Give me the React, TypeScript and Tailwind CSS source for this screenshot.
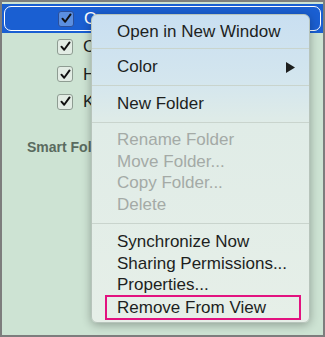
import type { ReactNode } from 'react';

const folders = [
  { label: 'O', selected: true },
  { label: 'C', selected: false },
  { label: 'H', selected: false },
  { label: 'K', selected: false },
];

const CheckBox = ({ selected }: { selected: boolean }) => (
  <div
    className={`w-4 h-4 rounded-[3px] border flex items-center justify-center ${
      selected ? 'bg-[#5b8fe0] border-[#2b4f9a]' : 'bg-[#e2ece4] border-[#8e9c92]'
    }`}
  >
    <svg viewBox="0 0 16 16" className="w-[13px] h-[13px]">
      <path d="M3 8.2 L6.4 12 L13 3" fill="none" stroke="#111" strokeWidth="2.4" strokeLinecap="round" strokeLinejoin="round" />
    </svg>
  </div>
);

const Item = ({ children, disabled, className = '' }: { children: ReactNode; disabled?: boolean; className?: string }) => (
  <div className={`pl-[25px] flex items-center whitespace-nowrap ${disabled ? 'text-[#a4aaa6]' : 'text-[#1d1f1e]'} ${className}`}>
    {children}
  </div>
);

const Separator = () => <div className="h-px bg-[#c9d4cd]" />;

export default function App() {
  return (
    <div
      className="relative w-[325px] h-[337px] border-2 border-[#7d7d7d] bg-[#cde3d3] overflow-hidden"
      style={{ fontFamily: '"Liberation Sans", Arial, sans-serif' }}
    >
      {/* folder list */}
      <div className="pt-[2px]">
        {folders.map((f) =>
          f.selected ? (
            <div key={f.label} className="h-[29px] bg-[#1a5fd2] p-[2px]">
              <div className="h-full rounded-[7px] border-[1.5px] border-white flex items-center pl-[53px] gap-[10px]">
                <CheckBox selected />
                <span className="text-white text-[17px]">{f.label}</span>
              </div>
            </div>
          ) : (
            <div key={f.label} className="h-[27.5px] flex items-center pl-[55px] gap-[10px]">
              <CheckBox selected={false} />
              <span className="text-[#1d1f1e] text-[17px]">{f.label}</span>
            </div>
          )
        )}
        <div className="mt-[21px] pl-[25px] text-[14px] font-bold text-[#5a6b5f]">Smart Folders</div>
      </div>

      {/* context menu */}
      <div className="absolute left-[89px] top-[12px] w-[219px] h-[309px] rounded-[6px] border border-[#b7c4bb] shadow-[0_2px_10px_rgba(0,0,0,0.3)] bg-[linear-gradient(to_bottom,#c9dff1_0%,#d4e6ee_22%,#e0ece7_36%,#e6efe8_100%)] text-[17px] overflow-hidden">
        <Item className="h-[33px] pt-[1px]">Open in New Window</Item>
        <Separator />
        <Item className="h-[36px] justify-between pr-[14px]">
          <span>Color</span>
          <svg viewBox="0 0 9 11" className="w-[9px] h-[11px]">
            <polygon points="0,0 9,5.5 0,11" fill="#1d1f1e" />
          </svg>
        </Item>
        <Separator />
        <Item className="h-[36px]">New Folder</Item>
        <Separator />
        <div className="pt-[6px] pb-[8px]">
          <Item disabled className="h-[21.5px]">Rename Folder</Item>
          <Item disabled className="h-[21.5px]">Move Folder...</Item>
          <Item disabled className="h-[21.5px]">Copy Folder...</Item>
          <Item disabled className="h-[21.5px]">Delete</Item>
        </div>
        <Separator />
        <div className="pt-[7px]">
          <Item className="h-[22px]">Synchronize Now</Item>
          <Item className="h-[22px]">Sharing Permissions...</Item>
          <Item className="h-[20px]">Properties...</Item>
          <div className="ml-[13px] mr-[8px] h-[25px] border-2 border-[#e2127f] pl-[10px] flex items-center text-[#1d1f1e]">
            Remove From View
          </div>
        </div>
      </div>
    </div>
  );
}
